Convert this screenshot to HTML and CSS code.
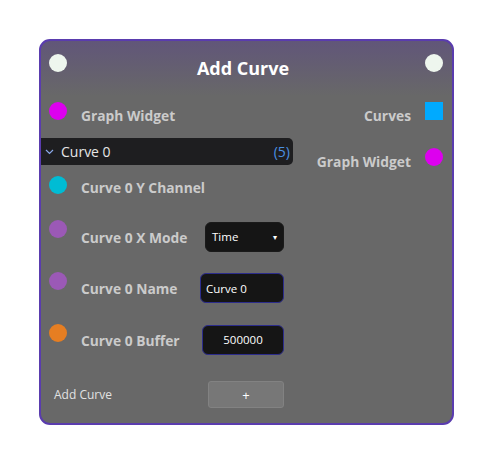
FILE: index.html
```html
<!DOCTYPE html>
<html>
<head>
<meta charset="utf-8">
<link rel="stylesheet" href="styles.css">
</head>
<body>
<div class="node">
  <div class="header">
    <span class="port white"></span>
    <div class="title">Add Curve</div>
    <span class="port white"></span>
  </div>
  <div class="body">
    <div class="inputs">
      <div class="row r-gw">
        <span class="port magenta"></span>
        <span class="label">Graph Widget</span>
      </div>
      <div class="group">
        <span class="chev"><svg width="9" height="6" viewBox="0 0 9 6"><path d="M1 1 L4.5 4.5 L8 1" fill="none" stroke="#8aa8e8" stroke-width="1.2"/></svg></span>
        <span class="group-name">Curve 0</span>
        <span class="group-count">(5)</span>
      </div>
      <div class="row r-y">
        <span class="port cyan"></span>
        <span class="label">Curve 0 Y Channel</span>
      </div>
      <div class="row r-x">
        <span class="port purple"></span>
        <span class="label">Curve 0 X Mode</span>
        <div class="select"><span>Time</span><span class="arrow">▾</span></div>
      </div>
      <div class="row r-name">
        <span class="port purple"></span>
        <span class="label">Curve 0 Name</span>
        <div class="input name-input">Curve 0</div>
      </div>
      <div class="row r-buf">
        <span class="port orange"></span>
        <span class="label">Curve 0 Buffer</span>
        <div class="input buf-input">500000</div>
      </div>
    </div>
    <div class="outputs">
      <div class="orow o-curves">
        <span class="label">Curves</span>
        <span class="port square"></span>
      </div>
      <div class="orow o-gw">
        <span class="label">Graph Widget</span>
        <span class="port magenta"></span>
      </div>
    </div>
  </div>
  <div class="footer">
    <span class="footer-label">Add Curve</span>
    <div class="button">+</div>
  </div>
</div>
</body>
</html>
```
FILE: styles.css
```css
* { box-sizing: border-box; }
html, body { margin: 0; padding: 0; background: #ffffff; }
body { padding: 39px 0 0 39px; font-family: "Open Sans", "Noto Sans", sans-serif; }

.node {
  width: 415px;
  border: 2px solid #5a3cae;
  border-radius: 11px;
  background: linear-gradient(to bottom, #615679 0px, #686868 55px, #686868 100%);
  background-color: #686868;
  overflow: hidden;
}

.header {
  display: flex;
  align-items: flex-start;
  height: 61px;
  padding: 13px 9px 0 8px;
}
.title {
  flex: 1;
  text-align: center;
  color: #ffffff;
  font-weight: 700;
  font-size: 18px;
  line-height: 22px;
  margin-top: 3px;
  padding-right: 6px;
}

.port {
  display: inline-block;
  width: 18px;
  height: 18px;
  border-radius: 50%;
  flex: none;
}
.white { background: #eef6ee; }
.magenta { background: #dd00ee; }
.cyan { background: #00bcd4; }
.purple { background: #9b59b6; }
.orange { background: #e67e22; }
.square { background: #00aaff; border-radius: 0; }

.body { display: flex; }
.inputs { width: 252px; display: flex; flex-direction: column; }
.outputs { flex: 1; display: flex; flex-direction: column; }

.row {
  display: flex;
  align-items: center;
  padding: 0 9px 0 8px;
}
.row .port { align-self: flex-start; margin-right: 14px; }
.label {
  color: #cbcbcb;
  font-weight: 700;
  font-size: 13.8px;
  white-space: nowrap;
}
.r-gw { height: 26px; }
.r-gw .label { margin-top: 1px; }
.r-y { height: 22px; margin-top: 11px; }
.r-x { height: 32px; margin-top: 22px; }
.r-name { height: 31px; margin-top: 20px; }
.r-buf { height: 31px; margin-top: 21px; }
.r-x .label, .r-name .label, .r-buf .label { margin-top: 2px; }

.group {
  display: flex;
  align-items: center;
  height: 27px;
  margin-top: 10px;
  background: #1e1e20;
  border-radius: 0 5px 5px 0;
  padding: 0 3px 0 4px;
  color: #e6e6e6;
  font-size: 14px;
}
.chev { display: flex; align-items: center; width: 16px; margin-top: 1px; }
.group-name { flex: 1; }
.group-count { color: #4a90e2; }

.select, .input {
  margin-left: auto;
  background: #151515;
  color: #ffffff;
  font-size: 11.5px;
  border-radius: 6px;
}
.select {
  width: 79px;
  height: 30px;
  margin-top: 1px;
  display: flex;
  align-items: center;
  justify-content: space-between;
  padding: 0 6px 0 6px;
  border: 1px solid #1a1a1a;
}
.arrow { font-size: 8px; }
.input {
  height: 30px;
  border: 1px solid #2c2c8c;
  display: flex;
  align-items: center;
}
.name-input { width: 84px; padding-left: 5px; margin-top: 1px; }
.buf-input { width: 82px; justify-content: center; }

.orow {
  display: flex;
  align-items: center;
  justify-content: flex-end;
  padding-right: 9px;
}
.orow .port { align-self: flex-start; margin-left: 14px; }
.o-curves { height: 26px; }
.o-curves .label { margin-top: 1px; }
.o-gw { height: 24px; margin-top: 20px; }
.o-gw .label { margin-top: 2px; }

.footer {
  display: flex;
  align-items: center;
  height: 27px;
  margin: 26px 0 15px 0;
  padding: 0 0 0 13px;
}
.footer-label {
  color: #e2e2e2;
  font-size: 12px;
  width: 154px;
}
.button {
  width: 76px;
  height: 27px;
  background: #777777;
  border: 1px solid #828282;
  border-radius: 3px;
  color: #ffffff;
  font-size: 13px;
  display: flex;
  align-items: center;
  justify-content: center;
}
```
